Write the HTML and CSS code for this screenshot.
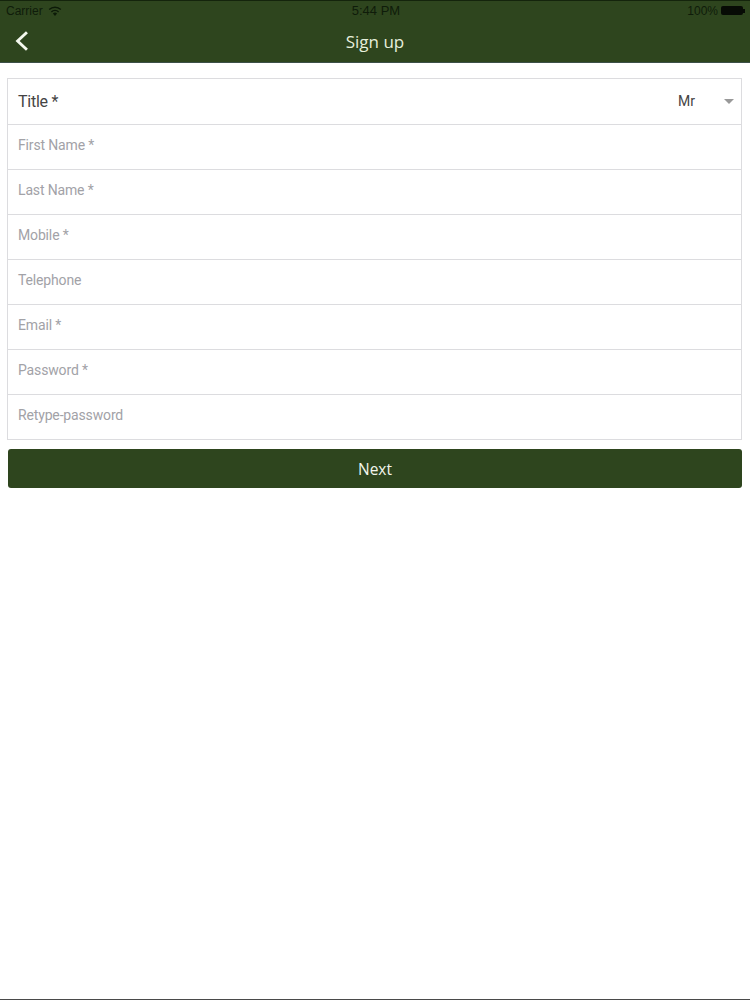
FILE: index.html
```html
<!DOCTYPE html>
<html lang="en">
<head>
<meta charset="utf-8">
<title>Sign up</title>
<link rel="stylesheet" href="styles.css">
</head>
<body>
<div class="screen">
  <header class="header">
    <div class="status">
      <div class="status-left">
        <span>Carrier</span>
        <svg class="wifi" viewBox="0 0 14 10" aria-hidden="true"><path d="M7 10 4.9 7.6a3 3 0 0 1 4.2 0Z" fill="#0c1a08"/><path d="M3.4 5.9a5 5 0 0 1 7.2 0" fill="none" stroke="#0c1a08" stroke-width="1.4"/><path d="M1.2 3.6a8.2 8.2 0 0 1 11.6 0" fill="none" stroke="#0c1a08" stroke-width="1.4"/></svg>
      </div>
      <div class="status-time">5:44 PM</div>
      <div class="status-right">
        <span>100%</span>
        <span class="battery"></span>
        <span class="battery-tip"></span>
      </div>
    </div>
    <div class="navbar">
      <button class="back" aria-label="Back">
        <svg viewBox="0 0 14 20" class="back-icon" aria-hidden="true"><path d="M11.5 2 3 10l8.500 8" fill="none" stroke="#f4f8ee" stroke-width="2.600"/></svg>
      </button>
      <div class="nav-title">Sign up</div>
    </div>
  </header>
  <main class="content">
    <div class="form">
      <div class="row row-select">
        <span class="select-label">Title *</span>
        <span class="select-value">Mr</span>
        <span class="caret"></span>
      </div>
      <div class="row">First Name *</div>
      <div class="row">Last Name *</div>
      <div class="row">Mobile *</div>
      <div class="row">Telephone</div>
      <div class="row">Email *</div>
      <div class="row">Password *</div>
      <div class="row">Retype-password</div>
    </div>
    <button class="next">Next</button>
  </main>
</div>
</body>
</html>
```

FILE: styles.css
```css
* { box-sizing: border-box; }
html, body { margin: 0; padding: 0; background: #fff; }
.screen {
  width: 750px;
  height: 1000px;
  display: flex;
  flex-direction: column;
  border-bottom: 1px solid #4a4a4a;
  overflow: hidden;
}
.header {
  height: 63px;
  background: #2e451e;
  border-top: 1px solid #14240c;
  border-bottom: 1px solid #3c5048;
}
.status {
  height: 19px;
  padding: 0 5px 0 6px;
  display: grid;
  grid-template-columns: 1fr auto 1fr;
  align-items: center;
  font: 12px "Liberation Sans", Arial, sans-serif;
  color: #0f1c0a;
}
.status-left { display: flex; align-items: center; gap: 5px; }
.wifi { width: 14px; height: 10px; }
.status-time { font-size: 13px; padding-left: 1px; }
.status-right { display: flex; align-items: center; justify-content: flex-end; }
.battery {
  width: 22px;
  height: 9px;
  margin-left: 3px;
  background: #070b05;
  border-radius: 2px;
}
.battery-tip {
  width: 2px;
  height: 4px;
  background: #070b05;
}
.navbar {
  height: 42px;
  display: flex;
  align-items: center;
  justify-content: center;
  position: relative;
}
.back {
  position: absolute;
  left: 14px;
  top: 10px;
  width: 16px;
  height: 22px;
  padding: 0;
  border: 0;
  background: none;
}
.back-icon { display: block; width: 16px; height: 22px; }
.nav-title {
  font: 17px "Open Sans", sans-serif;
  color: #e6efdc;
  padding-top: 1px;
}
.content {
  padding: 15px 8px 0 7px;
  display: flex;
  flex-direction: column;
}
.form {
  border: 1px solid #dcdcdf;
  border-bottom-width: 0;
}
.row {
  height: 45px;
  padding: 0 10px 5px;
  display: flex;
  align-items: center;
  border-bottom: 1px solid #dcdcdf;
  font: 14px Roboto, sans-serif;
  letter-spacing: -0.15px;
  color: #a2a2a7;
}
.row-select {
  height: 46px;
  padding: 0 7px 1px 10px;
  font-size: 16px;
  letter-spacing: -0.25px;
  color: #444;
}
.select-label { flex: 1; }
.select-value {
  font-size: 14px;
  letter-spacing: 0;
  color: #444;
  margin-right: 29px;
}
.caret {
  width: 0;
  height: 0;
  border-left: 5.5px solid transparent;
  border-right: 5.5px solid transparent;
  border-top: 5px solid #999;
}
.next {
  height: 39px;
  margin: 9px 0 0 1px;
  padding: 0;
  background: #2e451e;
  border: 0;
  border-radius: 3px;
  color: #f2f5ec;
  font: 15.5px "Open Sans", sans-serif;
}
```
